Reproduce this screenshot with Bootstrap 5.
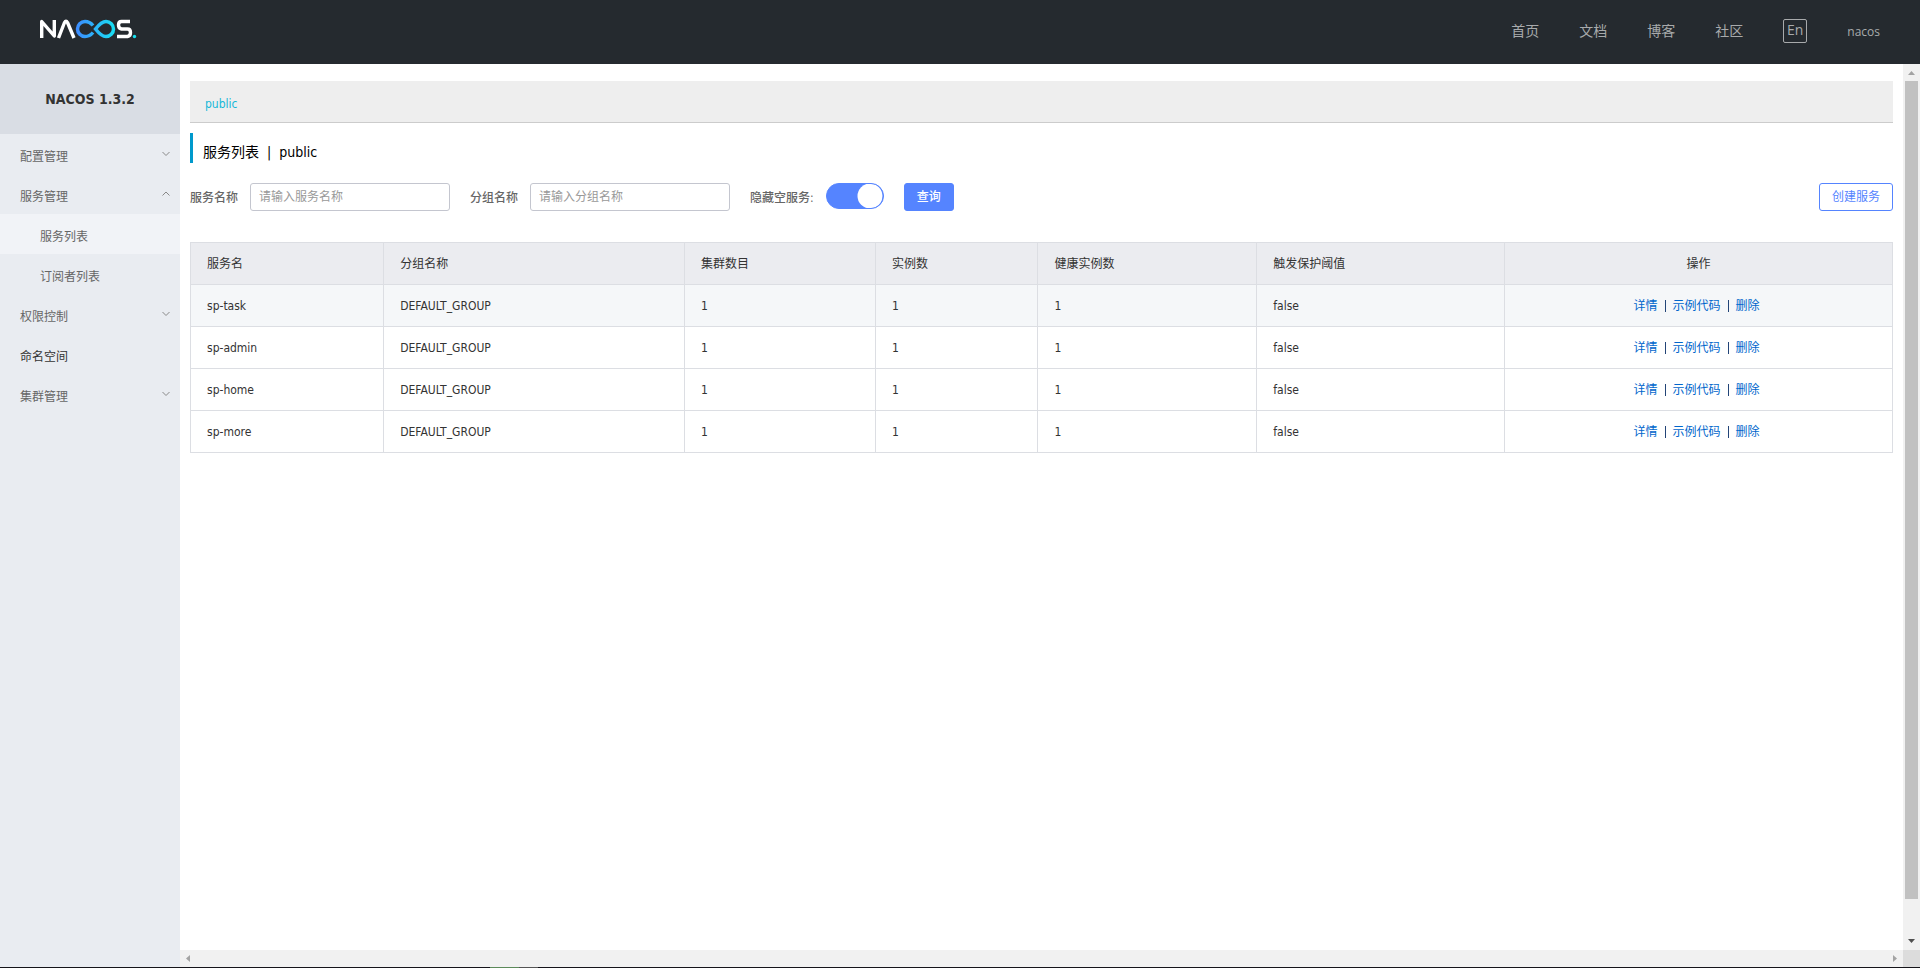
<!DOCTYPE html>
<html lang="zh-CN">
<head>
<meta charset="utf-8">
<meta name="viewport" content="width=device-width, initial-scale=1">
<title>Nacos</title>
<link href="https://cdn.jsdelivr.net/npm/bootstrap@5.3.0/dist/css/bootstrap.min.css" rel="stylesheet">
<style>
body{font-family:"DejaVu Sans Condensed","Noto Sans CJK SC",sans-serif;font-size:12px;line-height:18px;color:#333;background:#fff}
a{text-decoration:none}
.top-bar{height:64px;padding:0 40px 2px;background:#252a2f}
.top-bar .nav{gap:40px}
.top-bar .nav-link{padding:0;font-family:"Open Sans","Noto Sans CJK SC",sans-serif;font-size:14px;line-height:20px;color:#a8aaac}
.top-bar .user-link{font-size:12px;padding-top:2px}
.lang-btn{width:24px;height:24px;padding:0;border:1px solid #a8aaac;border-radius:2px;background:none;color:#a8aaac;font-family:"Open Sans",sans-serif;font-size:14px;line-height:18px;padding-bottom:2px}
.side-bar{width:180px;background:#e9ecf1}
.side-title{height:70px;background:#d9dde4;font-size:14px;font-weight:700}
.side-link{height:40px;padding:6px 10px 0 20px;color:#666}
.side-link svg{margin-bottom:6px}
.side-link.sub-item{padding-left:40px}
.side-link.current{background:#f1f3f7}
.side-link.plain{color:#333}
.view-pane{padding:17px 10px 0}
.ns-bar{height:42px;padding:4px 15px 0;background:#eee;border-bottom:1px solid #ccc}
.ns-bar a{color:#16b8d8}
.page-title{height:30px;margin:10px 0 20px;padding:8px 0 0 10px;border-left:3px solid #09c;font-size:14px;line-height:22px;font-weight:400;color:#000}
.query-form{height:28px}
.query-form label{font-weight:500;color:#666;margin-right:12px;padding-top:2px}
.query-form .form-control{width:200px;height:28px;margin-right:20px;padding:0 8px;border:1px solid #c4c6cf;border-radius:3px;font-size:12px}
.query-form .form-control::placeholder{color:#999}
.query-form .switch-box{display:flex;align-items:flex-start;padding:0;margin:0 20px 0 0;height:28px;min-height:0}
.query-form .switch-box .form-check-input{float:none;margin:0;width:58px;height:26px;border:1px solid #5584ff;background-color:#5584ff;background-size:26px 26px;background-position:right center;background-image:url("data:image/svg+xml,%3Csvg xmlns='http://www.w3.org/2000/svg' viewBox='0 0 26 26'%3E%3Ccircle cx='13' cy='13' r='12.5' fill='%23fff'/%3E%3C/svg%3E")}
.query-form .btn{height:28px;padding:0 12px;border-radius:3px;font-size:12px;line-height:26px}
.query-form .btn-query{background:#5584ff;border-color:#5584ff;color:#fff;font-weight:500}
.query-form .btn-create{border-color:#5584ff;color:#5584ff;background:#fff}
.svc-table{margin:31px 0 0;table-layout:fixed;border-color:#dcdee3;color:#333}
.svc-table th,.svc-table td{height:42px;padding:0 16px;vertical-align:middle;font-weight:400;border-color:#dcdee3;color:#333;box-shadow:none}
.svc-table thead th{background:#ebecf0}
.svc-table tr.hovered td{background:#f5f7f9}
.svc-table td a{color:#06c}
.svc-table .ops{padding-right:20px}
.svc-table .ops i{display:inline-block;width:1px;height:12px;margin:0 7px;background:#247;vertical-align:-2px}
.track-v{width:17px;background:#f1f1f1}
.track-v .thumb{width:13px;height:818px;background:#c1c1c1}
.track-h{height:17px;background:#f1f1f1}
.cap{width:17px;height:17px;flex:none}
.corner{width:17px;background:#dcdcdc}
.edge-line{height:1px;background:#15141a}
.edge-line .seg-lead{width:490px}
.edge-line .seg-green{width:29px;background:#5c8a5a}
.edge-line .seg-grey{width:19px;background:#555}
</style>
</head>
<body>
<div class="d-flex flex-column vh-100 overflow-hidden">
  <header class="top-bar d-flex align-items-center justify-content-between flex-shrink-0">
    <a href="#" aria-label="NACOS" class="d-flex pb-1">
      <svg width="97" height="20" viewBox="0 0 97 20" fill="none">
        <defs><linearGradient id="loop" gradientUnits="userSpaceOnUse" x1="36" y1="0" x2="76" y2="0"><stop stop-color="#3d8bff"/><stop offset="1" stop-color="#17e2f2"/></linearGradient></defs>
        <g stroke="#fff" stroke-width="3.400" stroke-linejoin="round">
          <path d="M1.700 19V2.500L14.300 17V1"/>
          <path d="M18.500 19L24.500 3.500Q26 1 27.500 3.500L34 19"/>
          <path d="M90 2.500H81.500Q78.500 2.500 78.500 6T81.500 10H87.500Q90.500 10 90.500 13.500T87.500 17.500H77"/>
        </g>
        <path d="M53 6.500C50.500 3.500 48 2.500 45 2.500A7.500 7.500 0 0 0 45 17.500C48 17.500 50.500 16.500 53 13.500M55.500 10C59 5.500 62 2.500 66 2.500A7.500 7.500 0 0 1 66 17.500C62 17.500 59 14.500 55.500 10Z" stroke="url(#loop)" stroke-width="3.500"/>
        <circle cx="94.500" cy="17.500" r="1.700" fill="#17e2f2"/>
      </svg>
    </a>
    <nav class="nav align-items-center flex-nowrap">
      <a class="nav-link" href="#">首页</a>
      <a class="nav-link" href="#">文档</a>
      <a class="nav-link" href="#">博客</a>
      <a class="nav-link" href="#">社区</a>
      <button type="button" class="lang-btn">En</button>
      <a class="nav-link user-link" href="#">nacos</a>
    </nav>
  </header>

  <div class="d-flex flex-grow-1 overflow-hidden">
    <aside class="side-bar flex-shrink-0">
      <div class="side-title d-flex align-items-center justify-content-center">NACOS 1.3.2</div>
      <nav class="d-flex flex-column">
        <a href="#" class="side-link d-flex align-items-center justify-content-between">配置管理<svg width="8" height="6" fill="none" stroke="#888"><path d="M.5 1L4 4.500L7.500 1"/></svg></a>
        <a href="#" class="side-link d-flex align-items-center justify-content-between">服务管理<svg width="8" height="6" fill="none" stroke="#888"><path d="M.5 4.500L4 1L7.500 4.500"/></svg></a>
        <a href="#" class="side-link sub-item current d-flex align-items-center">服务列表</a>
        <a href="#" class="side-link sub-item d-flex align-items-center">订阅者列表</a>
        <a href="#" class="side-link d-flex align-items-center justify-content-between">权限控制<svg width="8" height="6" fill="none" stroke="#888"><path d="M.5 1L4 4.500L7.500 1"/></svg></a>
        <a href="#" class="side-link plain d-flex align-items-center">命名空间</a>
        <a href="#" class="side-link d-flex align-items-center justify-content-between">集群管理<svg width="8" height="6" fill="none" stroke="#888"><path d="M.5 1L4 4.500L7.500 1"/></svg></a>
      </nav>
    </aside>

    <div class="d-flex flex-column flex-grow-1 overflow-hidden">
      <div class="d-flex flex-grow-1 overflow-hidden">
        <main class="view-pane flex-grow-1">
          <div class="ns-bar d-flex align-items-center"><a href="#">public</a></div>
          <h1 class="page-title d-flex align-items-center"><span>服务列表</span><span class="px-2">|</span><span>public</span></h1>
          <form class="query-form d-flex align-items-center">
            <label for="svc">服务名称</label>
            <input id="svc" type="text" class="form-control" placeholder="请输入服务名称">
            <label for="grp">分组名称</label>
            <input id="grp" type="text" class="form-control" placeholder="请输入分组名称">
            <label for="hide">隐藏空服务:</label>
            <div class="form-check form-switch switch-box"><input id="hide" class="form-check-input" type="checkbox" role="switch" checked></div>
            <button type="button" class="btn btn-query">查询</button>
            <button type="button" class="btn btn-create ms-auto">创建服务</button>
          </form>
          <table class="table table-bordered svc-table">
            <colgroup><col style="width:11.35%"><col style="width:17.68%"><col style="width:11.22%"><col style="width:9.54%"><col style="width:12.86%"><col style="width:14.56%"><col></colgroup>
            <thead><tr><th>服务名</th><th>分组名称</th><th>集群数目</th><th>实例数</th><th>健康实例数</th><th>触发保护阈值</th><th class="text-center">操作</th></tr></thead>
            <tbody>
              <tr class="hovered"><td>sp-task</td><td>DEFAULT_GROUP</td><td>1</td><td>1</td><td>1</td><td>false</td><td class="ops text-center"><a href="#">详情</a><i></i><a href="#">示例代码</a><i></i><a href="#">删除</a></td></tr>
              <tr><td>sp-admin</td><td>DEFAULT_GROUP</td><td>1</td><td>1</td><td>1</td><td>false</td><td class="ops text-center"><a href="#">详情</a><i></i><a href="#">示例代码</a><i></i><a href="#">删除</a></td></tr>
              <tr><td>sp-home</td><td>DEFAULT_GROUP</td><td>1</td><td>1</td><td>1</td><td>false</td><td class="ops text-center"><a href="#">详情</a><i></i><a href="#">示例代码</a><i></i><a href="#">删除</a></td></tr>
              <tr><td>sp-more</td><td>DEFAULT_GROUP</td><td>1</td><td>1</td><td>1</td><td>false</td><td class="ops text-center"><a href="#">详情</a><i></i><a href="#">示例代码</a><i></i><a href="#">删除</a></td></tr>
            </tbody>
          </table>
        </main>
        <div class="track-v d-flex flex-column align-items-center flex-shrink-0" aria-hidden="true">
          <svg class="cap" viewBox="0 0 17 17"><path d="M5 11L8.500 7L12 11Z" fill="#a3a3a3"/></svg>
          <div class="thumb"></div>
          <svg class="cap mt-auto" viewBox="0 0 17 17"><path d="M5 6L8.500 10L12 6Z" fill="#505050"/></svg>
        </div>
      </div>
      <div class="d-flex flex-shrink-0" aria-hidden="true">
        <div class="track-h d-flex justify-content-between flex-grow-1">
          <svg class="cap" viewBox="0 0 17 17"><path d="M10 5L6 8.500L10 12Z" fill="#a3a3a3"/></svg>
          <svg class="cap" viewBox="0 0 17 17"><path d="M7 5L11 8.500L7 12Z" fill="#a3a3a3"/></svg>
        </div>
        <div class="corner"></div>
      </div>
    </div>
  </div>
  <div class="edge-line d-flex flex-shrink-0" aria-hidden="true"><span class="seg-lead"></span><span class="seg-green"></span><span class="seg-grey"></span></div>
</div>
<script src="https://cdn.jsdelivr.net/npm/bootstrap@5.3.0/dist/js/bootstrap.bundle.min.js"></script>
</body>
</html>
